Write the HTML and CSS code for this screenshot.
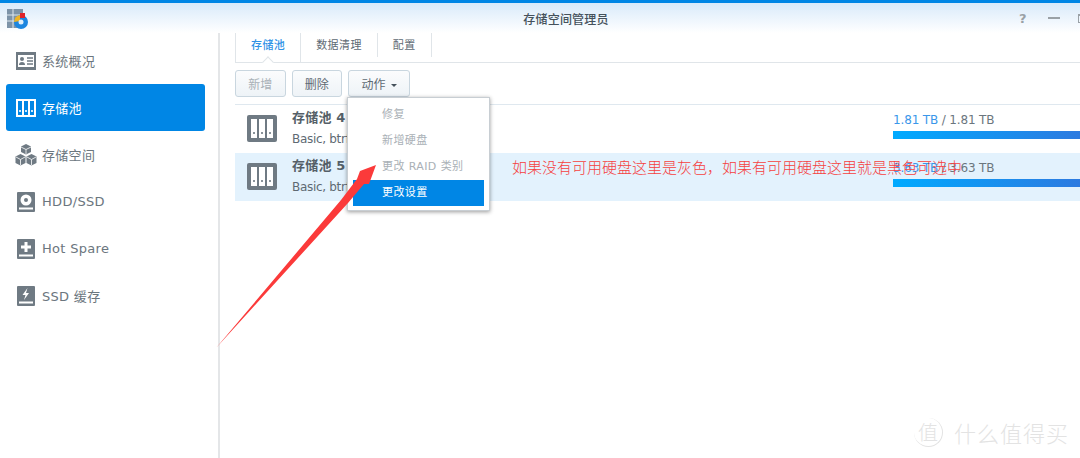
FILE: index.html
```html
<!DOCTYPE html>
<html lang="zh-CN">
<head>
    <meta charset="UTF-8">
    <title>存储空间管理员</title>
    <link rel="stylesheet" href="styles.css">
</head>
<body>
    <div class="window">
        <header class="titlebar">
            <svg class="app-logo" width="22" height="22" viewBox="0 0 22 22">
                <rect x="0" y="0" width="16" height="19" fill="#7d93a8"/>
                <path d="M0 6h16M0 12h16M6 0v19" stroke="#dfe7ee" stroke-width="1"/>
                <circle cx="14" cy="13" r="7" fill="#1c86e0"/>
                <path d="M7 13a7 7 0 0 1 6-7v6z" fill="#f0b323"/>
                <path d="M13 4h5v5h-5z" fill="#e0242a"/>
                <circle cx="14" cy="13" r="2.500" fill="#dfeefa"/>
            </svg>
            <span class="title">存储空间管理员</span>
            <div class="win-btns">
                <span class="win-help">?</span>
                <span class="win-min"></span>
                <span class="win-max"></span>
            </div>
        </header>
        <div class="body">
            <nav class="sidebar">
                <a class="nav-item">
                    <svg width="22" height="22" viewBox="0 0 22 22"><rect x="1" y="2" width="20" height="18" fill="#6f7a83"/><rect x="3" y="5" width="16" height="12" fill="#fff"/><circle cx="7" cy="9" r="2" fill="#6f7a83"/><path d="M4 15c0-2 1-3 3-3s3 1 3 3z" fill="#6f7a83"/><path d="M12 8h6M12 11h6M12 14h6" stroke="#6f7a83" stroke-width="1.4"/></svg>
                    系统概况
                </a>
                <a class="nav-item active">
                    <svg width="22" height="22" viewBox="0 0 22 22"><rect x="1" y="2" width="20" height="18" fill="#fff"/><path d="M3 4h4v14H3zM9 4h4v14H9zM15 4h4v14h-4z" fill="#0086e5"/><path d="M5 13v2M11 13v2M17 13v2" stroke="#fff" stroke-width="1.6"/></svg>
                    存储池
                </a>
                <a class="nav-item">
                    <svg width="22" height="22" viewBox="0 0 22 22"><path d="M11 0l5 2.500v5.500l-5 2.500-5-2.500V2.500z" fill="#6f7a83"/><path d="M5.500 10l5 2.500V19l-5 2.500-5-2.500v-6.500z" fill="#6f7a83"/><path d="M16.500 10l5 2.500V19l-5 2.500-5-2.500v-6.500z" fill="#6f7a83"/><path d="M6 3l5 2.500L16 3M11 5.500V10M1 13l4.500 2.500L10 13M5.500 15.500V21M12 13l4.500 2.500L21 13M16.500 15.500V21" stroke="#fff" stroke-width=".8" fill="none"/></svg>
                    存储空间
                </a>
                <a class="nav-item">
                    <svg width="22" height="22" viewBox="0 0 22 22"><rect x="2" y="1" width="18" height="20" rx="1" fill="#6f7a83"/><circle cx="11" cy="9" r="5.500" fill="#fff"/><circle cx="11" cy="9" r="2" fill="#6f7a83"/><rect x="4" y="16.500" width="14" height="2" fill="#fff"/></svg>
                    HDD/SSD
                </a>
                <a class="nav-item">
                    <svg width="22" height="22" viewBox="0 0 22 22"><rect x="2" y="1" width="18" height="20" rx="1" fill="#6f7a83"/><path d="M9.500 4h3v3.500H16v3h-3.500V14h-3v-3.500H6v-3h3.500z" fill="#fff"/><rect x="4" y="16.500" width="14" height="2" fill="#fff"/></svg>
                    Hot Spare
                </a>
                <a class="nav-item">
                    <svg width="22" height="22" viewBox="0 0 22 22"><rect x="2" y="1" width="18" height="20" rx="1" fill="#6f7a83"/><path d="M12.500 3L7.500 10h3l-1.500 5 5-7h-3z" fill="#fff"/><rect x="4" y="16.500" width="14" height="2" fill="#fff"/></svg>
                    SSD 缓存
                </a>
            </nav>
            <main class="main">
                <div class="tabs">
                    <span class="tab current">存储池</span>
                    <span class="tab">数据清理</span>
                    <span class="tab">配置</span>
                </div>
                <div class="toolbar">
                    <button class="btn disabled">新增</button>
                    <button class="btn">删除</button>
                    <button class="btn action">动作<i class="caret"></i></button>
                </div>
                <div class="pool-list">
                    <div class="pool">
                        <svg class="pool-icon" width="30" height="28" viewBox="0 0 30 28"><rect width="30" height="27" rx="2" fill="#6f7a83"/><path d="M4 4h6v19H4zM12 4h6v19h-6zM20 4h6v19h-6z" fill="#fff"/><path d="M7 17v2M15 17v2M23 17v2" stroke="#6f7a83" stroke-width="1.6"/></svg>
                        <div class="pool-info">
                            <div class="pool-name">存储池 4</div>
                            <div class="pool-desc">Basic, btrfs</div>
                        </div>
                        <div class="usage">
                            <div class="usage-text"><span class="used">1.81 TB</span> / 1.81 TB</div>
                            <div class="usage-bar"></div>
                        </div>
                    </div>
                    <div class="pool selected">
                        <svg class="pool-icon" width="30" height="28" viewBox="0 0 30 28"><rect width="30" height="27" rx="2" fill="#6f7a83"/><path d="M4 4h6v19H4zM12 4h6v19h-6zM20 4h6v19h-6z" fill="#fff"/><path d="M7 17v2M15 17v2M23 17v2" stroke="#6f7a83" stroke-width="1.6"/></svg>
                        <div class="pool-info">
                            <div class="pool-name">存储池 5</div>
                            <div class="pool-desc">Basic, btrfs</div>
                        </div>
                        <div class="usage">
                            <div class="usage-text"><span class="used">3.63 TB</span> / 3.63 TB</div>
                            <div class="usage-bar"></div>
                        </div>
                    </div>
                </div>
            </main>
        </div>

        <ul class="menu">
            <li class="off">修复</li>
            <li class="off">新增硬盘</li>
            <li class="off">更改 RAID 类别</li>
            <li class="hover">更改设置</li>
        </ul>

        <div class="note">如果没有可用硬盘这里是灰色，如果有可用硬盘这里就是黑色可选中</div>

        <svg class="arrow" width="1080" height="458" viewBox="0 0 1080 458">
            <path d="M216 348L341 200L357 179L360 171L376 165L369 184L364 184L348 203z" fill="#fb3a3a"/>
        </svg>

        <div class="watermark"><span class="wm-badge">值</span>什么值得买</div>
    </div>
</body>
</html>
```

FILE: styles.css
```css
html, body {
    margin: 0;
    padding: 0;
    background-color: #fff;
}

.window {
    position: relative;
    width: 1080px;
    height: 458px;
    overflow: hidden;
    display: flex;
    flex-direction: column;
    font-family: "DejaVu Sans", "Noto Sans CJK SC", sans-serif;
    font-size: 12px;
    color: #5e6a73;
}

.titlebar {
    height: 30px;
    flex: none;
    border-top: 3px solid #0086e5;
    background: linear-gradient(#d9eafa, #fff);
    display: flex;
    align-items: center;
    padding: 0 0 0 7px;
    position: relative;
}

.app-logo {
    margin-top: 3px;
}

.title {
    position: absolute;
    left: 52px;
    right: 0;
    top: 7px;
    text-align: center;
    font-size: 12px;
    letter-spacing: .2px;
    color: #45515b;
    font-weight: 500;
}

.win-btns {
    margin-left: auto;
    display: flex;
    align-items: center;
    gap: 18px;
    margin-right: -8px;
    color: #9aa1a6;
}

.win-help {
    font-size: 13px;
    font-weight: 700;
    width: 11px;
}

.win-min {
    width: 12px;
    height: 2px;
    background-color: #9aa1a6;
}

.win-max {
    width: 10px;
    height: 9px;
    border: 1px solid #9aa1a6;
    border-top-width: 2px;
    box-sizing: border-box;
}

.body {
    flex: 1;
    display: flex;
}

.sidebar {
    width: 220px;
    flex: none;
    box-sizing: border-box;
    padding: 4px 13px 0 6px;
    border-right: 2px solid #e4e6e8;
    height: 100%;
}

.nav-item {
    height: 47px;
    display: flex;
    align-items: center;
    gap: 5px;
    padding-left: 9px;
    border-radius: 3px;
    font-size: 13px;
    letter-spacing: .3px;
    color: #6b767e;
}

.nav-item.active {
    background-color: #0086e5;
    color: #fff;
}

.main {
    flex: 1;
    min-width: 0;
    padding: 0 0 0 15px;
}

.tabs {
    display: flex;
    height: 29px;
    border-bottom: 1px solid #e0e5e9;
    position: relative;
}

.tab {
    padding: 0 15px;
    font-size: 11px;
    letter-spacing: .4px;
    line-height: 26px;
    border-right: 1px solid #e0e5e9;
    color: #5e6a73;
    height: 24px;
}

.tab.current {
    color: #2f92e6;
    border-left: 1px solid #e0e5e9;
    position: relative;
    font-weight: 500;
    height: 29px;
}

.tab.current::after {
    content: "";
    position: absolute;
    left: 28px;
    bottom: -1px;
    width: 7px;
    height: 7px;
    background-color: #fff;
    border-left: 1px solid #e0e5e9;
    border-top: 1px solid #e0e5e9;
    transform: translateY(3px) rotate(45deg);
}

.toolbar {
    display: flex;
    gap: 6px;
    padding: 7px 0;
}

.btn {
    height: 27px;
    width: 50.500px;
    padding: 0;
    border: 1px solid #c9d6df;
    border-radius: 3px;
    background: linear-gradient(#fbfcfd, #eef3f7);
    font-family: inherit;
    font-size: 12px;
    color: #5e6a73;
}

.btn.disabled {
    color: #a9b1b7;
}

.btn.action {
    width: 62px;
}

.caret {
    display: inline-block;
    margin-left: 5px;
    vertical-align: middle;
    border-top: 3px solid #45515b;
    border-left: 3px solid transparent;
    border-right: 3px solid transparent;
}

.pool-list {
    border-top: 1px solid #dfe8ef;
}

.pool {
    height: 48px;
    display: flex;
    padding-left: 12px;
}

.pool.selected {
    background-color: #e3f2fd;
}

.pool-icon {
    flex: none;
    margin-top: 10px;
}

.pool-info {
    margin-left: 15px;
    padding-top: 3px;
    width: 601px;
    flex: none;
}

.pool-name {
    font-size: 13px;
    font-weight: 700;
    letter-spacing: .2px;
    color: #555f68;
    line-height: 20px;
}

.pool-desc {
    font-size: 12px;
    letter-spacing: -.3px;
    line-height: 18px;
    margin-top: 2px;
}

.usage {
    flex: 1;
    padding-top: 7px;
}

.usage-text {
    font-size: 12px;
    letter-spacing: -.15px;
    line-height: 16px;
    color: #6b767e;
}

.used {
    color: #3a97ea;
}

.usage-bar {
    height: 8px;
    margin-top: 3px;
    background: linear-gradient(90deg, #00aaff, #2d7ae0);
}

.menu {
    position: absolute;
    left: 347px;
    top: 97px;
    width: 143px;
    height: 114px;
    box-sizing: border-box;
    margin: 0;
    padding: 4px 5px;
    list-style: none;
    background-color: #fff;
    border: 1px solid #c8ced3;
    box-shadow: 0 1px 4px rgba(0, 0, 0, 0.4);
    font-size: 11px;
    letter-spacing: .4px;
}

.menu li {
    height: 26px;
    line-height: 26px;
    padding-left: 29px;
}

.menu .off {
    color: #a9b0b6;
}

.menu .hover {
    background-color: #0086e5;
    color: #fff;
}

.note {
    position: absolute;
    left: 512px;
    top: 157px;
    font-family: "Noto Sans CJK SC", sans-serif;
    font-size: 15px;
    font-weight: 300;
    line-height: 20px;
    color: #f5413f;
    white-space: nowrap;
}

.arrow {
    position: absolute;
    left: 0;
    top: 0;
    pointer-events: none;
}

.watermark {
    position: absolute;
    left: 914px;
    top: 416px;
    display: flex;
    align-items: center;
    gap: 11px;
    font-family: "Noto Sans CJK SC", sans-serif;
    font-size: 22px;
    font-weight: 300;
    line-height: 32px;
    letter-spacing: 1px;
    white-space: nowrap;
    color: #e3e3e3;
}

.wm-badge {
    width: 29px;
    height: 29px;
    box-sizing: border-box;
    border-right: 1px solid #e3e3e3;
    border-bottom: 1px solid #e3e3e3;
    border-radius: 50%;
    font-size: 20px;
    line-height: 27px;
    text-align: center;
    letter-spacing: 0;
}
```
